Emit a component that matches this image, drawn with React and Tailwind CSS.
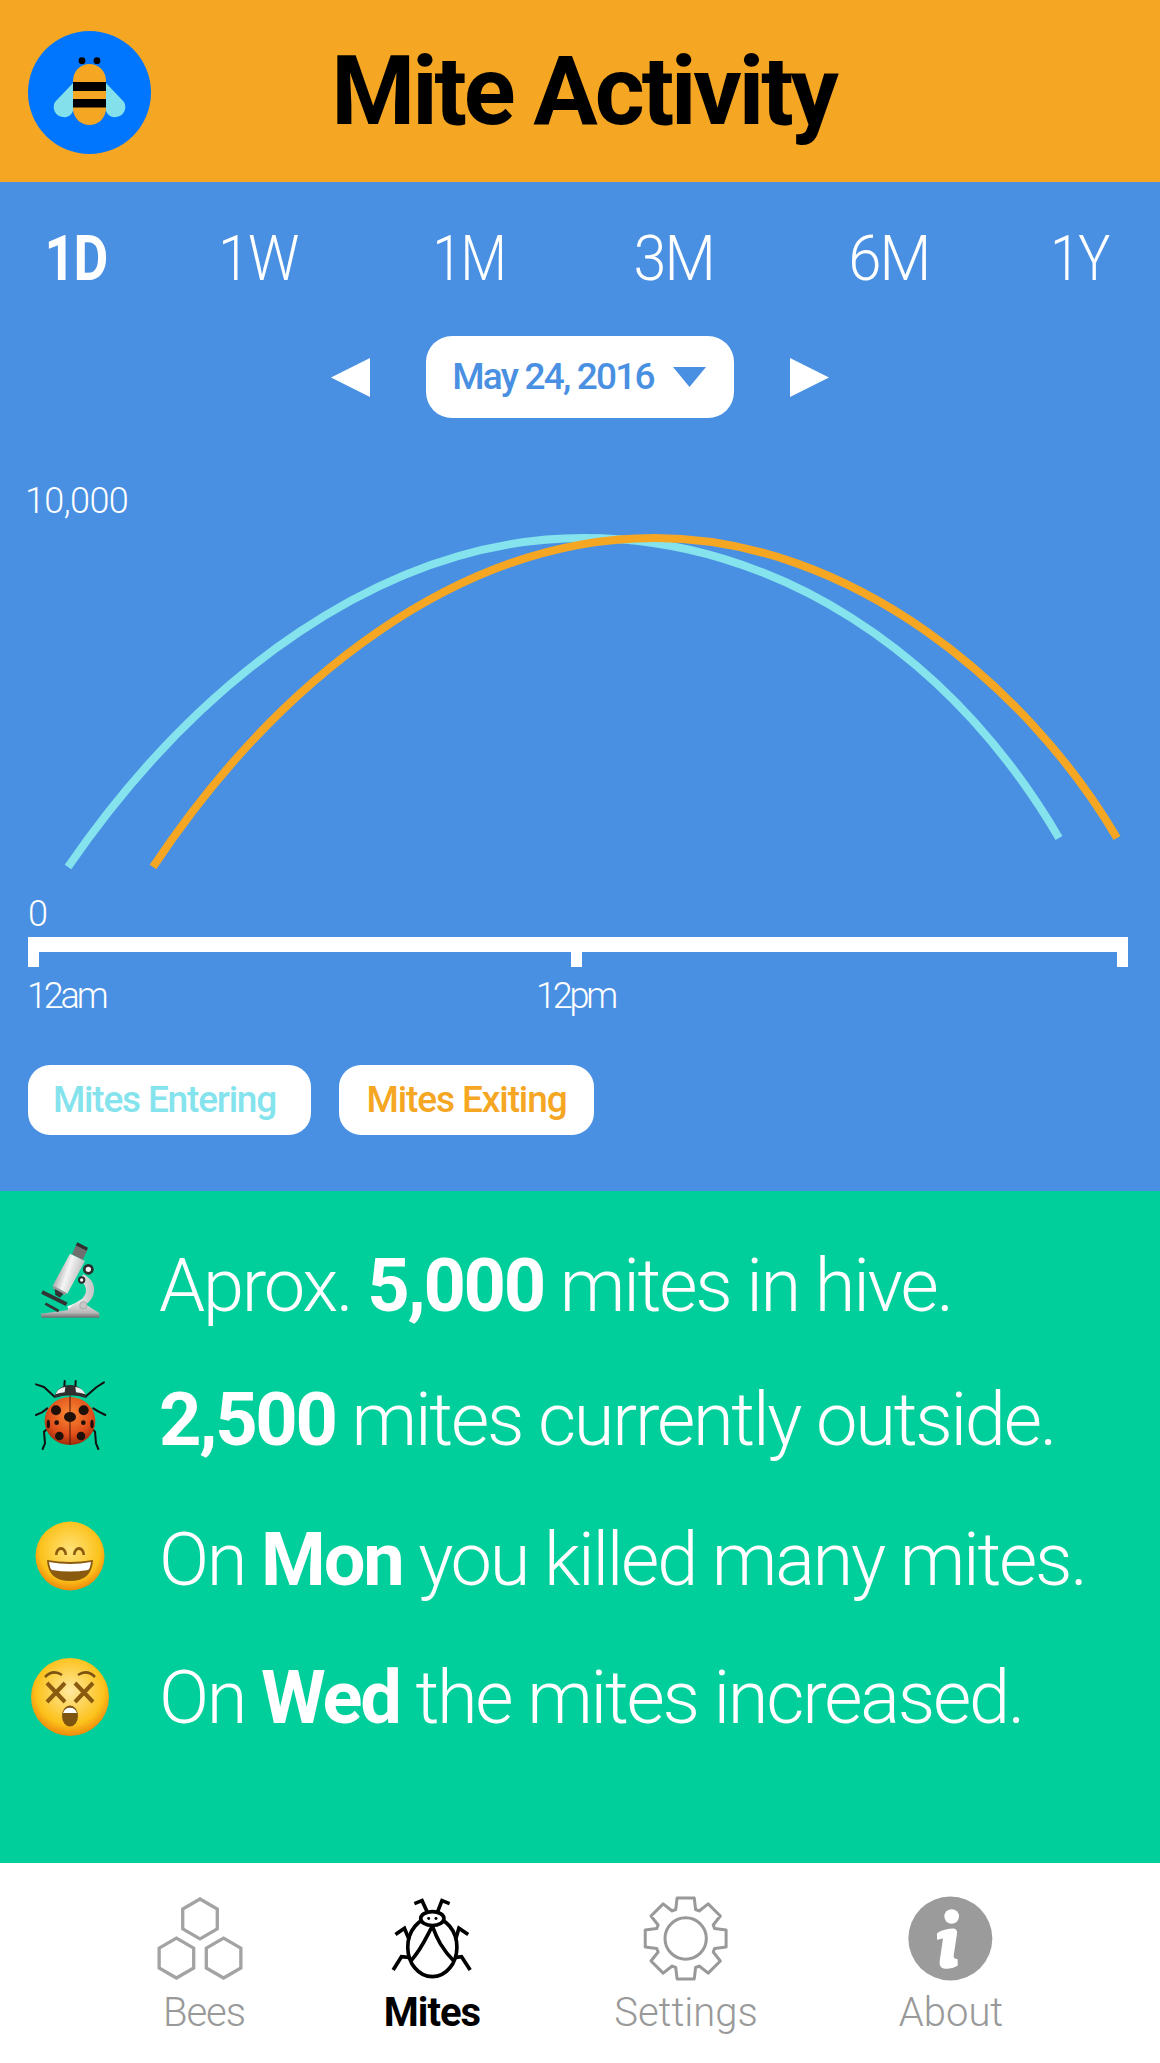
import React from "react";

const gearPath = (() => {
  const cx = 319, cy = 208, n = 8, ro = 124, ri = 92;
  const pts = [];
  for (let i = 0; i < n; i++) {
    const a = (i * 2 * Math.PI) / n - Math.PI / 2;
    const d = 0.21, e = 0.33;
    pts.push([a - e, ri], [a - d, ro], [a + d, ro], [a + e, ri]);
  }
  return pts.map(([a, r], i) => `${i ? "L" : "M"}${(cx + r * Math.cos(a)).toFixed(1)} ${(cy + r * Math.sin(a)).toFixed(1)}`).join(" ") + "Z";
})();

const hex = (cx, cy, r) => {
  const p = [];
  for (let i = 0; i < 6; i++) {
    const a = (i * Math.PI) / 3 - Math.PI / 2;
    p.push(`${(cx + r * Math.cos(a)).toFixed(1)},${(cy + r * Math.sin(a)).toFixed(1)}`);
  }
  return p.join(" ");
};

const F = "[font-family:'Roboto','Liberation_Sans',sans-serif]";

function Bee() {
  return (
    <svg viewBox="0 0 123 123" className="w-[123px] h-[123px]">
      <circle cx="61.5" cy="61.5" r="61.5" fill="#0076ff" />
      <path d="M45 52 L27 71 a10 10 0 0 0 8 15 q7 1 10 -6 Z" fill="#84e0ea" />
      <path d="M78 52 L96 71 a10 10 0 0 1 -8 15 q-7 1 -10 -6 Z" fill="#84e0ea" />
      <rect x="45" y="33" width="33" height="61" rx="16.5" fill="#f5a623" />
      <rect x="45" y="51" width="33" height="9" fill="#000" />
      <rect x="45" y="68" width="33" height="8.5" fill="#000" />
      <circle cx="54" cy="29.7" r="3.4" fill="#000" />
      <circle cx="69" cy="29.7" r="3.4" fill="#000" />
    </svg>
  );
}

function Microscope() {
  return (
    <svg viewBox="0 0 240 270" className="w-[80px] h-[90px] -translate-y-[6px]">
      <defs>
        <linearGradient id="tube" x1="0" y1="0.3" x2="1" y2="0.7">
          <stop offset="0" stopColor="#7f7f7f" /><stop offset="0.45" stopColor="#f5f5f5" /><stop offset="1" stopColor="#a8a8a8" />
        </linearGradient>
        <linearGradient id="base" x1="0" y1="0" x2="0" y2="1">
          <stop offset="0" stopColor="#ececec" /><stop offset="0.7" stopColor="#b9b9b9" /><stop offset="1" stopColor="#6f6f6f" />
        </linearGradient>
        <linearGradient id="arm" x1="0" y1="0" x2="1" y2="0">
          <stop offset="0" stopColor="#ffffff" /><stop offset="1" stopColor="#c4c4c4" />
        </linearGradient>
      </defs>
      <path d="M160 118 Q196 136 192 172 Q186 212 118 230 L112 214 Q166 196 168 168 Q168 146 146 134 Z" fill="url(#arm)" />
      <path d="M32 236 L110 226 L150 196 L176 214 L208 234 L208 248 L35 248 Z" fill="url(#base)" />
      <circle cx="160" cy="211" r="11" fill="#c8c8c8" stroke="#9a9a9a" strokeWidth="2" />
      <polygon points="138,30 172,45 158,76 126,58" fill="#6f6f6f" />
      <polygon points="142,22 174,38 170,47 137,31" fill="#2f2f2f" />
      <polygon points="120,56 165,78 112,176 68,152" fill="url(#tube)" />
      <polygon points="70,152 110,174 104,181 68,160" fill="#9a9a9a" />
      <polygon points="74,162 100,176 90,188 76,180" fill="#333" />
      <path d="M36 171 L110 208" stroke="#333" strokeWidth="12" />
      <path d="M46 206 L86 228" stroke="#333" strokeWidth="8" />
      <circle cx="175" cy="103" r="12" fill="#f5f5f5" stroke="#2b2b2b" strokeWidth="8" />
      <circle cx="155" cy="135" r="8" fill="#f5f5f5" stroke="#2b2b2b" strokeWidth="6" />
    </svg>
  );
}

function Ladybug() {
  return (
    <svg viewBox="0 0 240 255" className="w-[80px] h-[85px] -translate-y-[3px]">
      <defs>
        <radialGradient id="shell" cx="0.5" cy="0.35" r="0.72">
          <stop offset="0" stopColor="#f98a34" /><stop offset="0.6" stopColor="#e0501a" /><stop offset="1" stopColor="#8e1e08" />
        </radialGradient>
      </defs>
      <g stroke="#111" strokeWidth="6" fill="none" strokeLinecap="round" strokeLinejoin="round">
        <path d="M72 64 L42 36 L18 28" />
        <path d="M168 64 L200 36 L222 22" />
        <path d="M52 100 L36 112 L18 120" />
        <path d="M190 100 L206 110 L226 120" />
        <path d="M55 160 L42 170 L45 205 L38 222" />
        <path d="M185 160 L195 170 L198 205 L205 222" />
        <path d="M103 36 L104 18" />
        <path d="M136 36 L137 18" />
      </g>
      <ellipse cx="120" cy="138" rx="76" ry="72" fill="url(#shell)" />
      <path d="M72 70 Q80 32 120 30 Q160 32 170 70 Q120 52 72 70Z" fill="#2f2f2f" />
      <path d="M76 58 Q84 38 106 36 L104 52 Q90 54 76 58Z" fill="#eee" />
      <path d="M166 58 Q158 38 136 36 L138 52 Q152 54 166 58Z" fill="#eee" />
      <line x1="120" y1="58" x2="120" y2="210" stroke="#4a1206" strokeWidth="3" />
      <g fill="#20100a">
        <ellipse cx="120" cy="126" rx="18" ry="15" />
        <circle cx="78" cy="106" r="15" />
        <circle cx="161" cy="106" r="15" />
        <circle cx="80" cy="143" r="7" />
        <circle cx="160" cy="143" r="7" />
        <circle cx="88" cy="183" r="13" />
        <circle cx="153" cy="183" r="13" />
        <ellipse cx="55" cy="147" rx="5" ry="13" />
        <ellipse cx="186" cy="147" rx="5" ry="13" />
      </g>
    </svg>
  );
}

function Grin() {
  return (
    <svg viewBox="-40 -40 80 80" className="w-[80px] h-[80px] -translate-y-[4px]">
      <defs>
        <radialGradient id="face1" cx="0.5" cy="0.42" r="0.58">
          <stop offset="0" stopColor="#ffe27a" /><stop offset="0.75" stopColor="#fcc21b" /><stop offset="1" stopColor="#ee8a0a" />
        </radialGradient>
      </defs>
      <circle r="34.5" fill="url(#face1)" />
      <path d="M-15 -1 a6 8 0 0 1 12 0 h-2.5 a3.5 5 0 0 0 -7 0Z" fill="#8a5a0e" />
      <path d="M3 -1 a6 8 0 0 1 12 0 h-2.5 a3.5 5 0 0 0 -7 0Z" fill="#8a5a0e" />
      <path d="M-23 4 Q0 8 23 4 Q22 25 0 25 Q-22 25 -23 4Z" fill="#8a5a0e" />
      <path d="M-21 6 Q0 10 21 6 Q20 13 18 14 Q0 17 -18 14 Q-20 13 -21 6Z" fill="#fff" />
    </svg>
  );
}

function Dizzy() {
  return (
    <svg viewBox="-40 -40 80 80" className="w-[80px] h-[80px] -translate-y-[1px]">
      <defs>
        <radialGradient id="face2" cx="0.5" cy="0.42" r="0.58">
          <stop offset="0" stopColor="#ffe9a0" /><stop offset="0.75" stopColor="#fcc21b" /><stop offset="1" stopColor="#ee8a0a" />
        </radialGradient>
      </defs>
      <circle r="39" fill="url(#face2)" />
      <path d="M-25 -20 Q-17 -28 -8 -22" stroke="#7a5212" strokeWidth="2.6" fill="none" />
      <path d="M25 -20 Q17 -28 8 -22" stroke="#7a5212" strokeWidth="2.6" fill="none" />
      <path d="M-23 -14 L-5 5 M-5 -14 L-23 5 M5 -14 L23 5 M23 -14 L5 5" stroke="#8a5a0e" strokeWidth="4" fill="none" />
      <ellipse cx="0" cy="19" rx="8" ry="10.5" fill="#7e5510" />
      <path d="M-7 16 a7.5 8 0 0 1 14 0 Z" fill="#fff" />
    </svg>
  );
}

function HexIcon() {
  return (
    <svg viewBox="100 75 285 265" className="w-[95px] h-[88px] -ml-[8px]">
      <g fill="none" stroke="#a3a3a3" strokeWidth="10">
        <polygon points={hex(241, 150, 60)} />
        <polygon points={hex(170, 268, 60)} />
        <polygon points={hex(312, 268, 60)} />
      </g>
    </svg>
  );
}

function MiteIcon() {
  return (
    <svg viewBox="800 75 270 265" className="w-[90px] h-[88px]">
      <g fill="none" stroke="#000" strokeWidth="11">
        <ellipse cx="936" cy="235" rx="74" ry="89" />
        <ellipse cx="936" cy="149" rx="35" ry="21" fill="#fff" />
        <path d="M936 172 C920 200 905 240 870 278 M936 172 C950 210 965 240 1002 278" />
        <path d="M920 128 L905 95 L882 104 M952 128 L965 95 L988 104" />
        <path d="M866 212 L852 178 L825 197 M1006 212 L1016 178 L1044 197" />
        <path d="M865 266 L843 264 L818 304 M1007 266 L1024 264 L1050 304" />
      </g>
      <circle cx="925" cy="149" r="4.5" fill="#000" />
      <circle cx="947" cy="149" r="4.5" fill="#000" />
    </svg>
  );
}

function GearIcon() {
  return (
    <svg viewBox="185 75 270 266" className="w-[90px] h-[89px]">
      <g fill="none" stroke="#999" strokeWidth="9" strokeLinejoin="round">
        <path d={gearPath} />
        <circle cx="319" cy="208" r="62" />
      </g>
    </svg>
  );
}

function InfoIcon() {
  return (
    <svg viewBox="985 75 270 266" className="w-[90px] h-[89px]">
      <circle cx="1118" cy="208" r="126" fill="#9b9b9b" />
      <circle cx="1122" cy="142" r="22" fill="#fff" />
      <path d="M1078 192 Q1100 178 1128 178 Q1140 180 1138 194 L1128 260 Q1127 270 1140 270 L1140 290 Q1120 302 1098 298 Q1084 294 1086 276 L1096 208 L1078 212 Z" fill="#fff" />
    </svg>
  );
}

function NavItem({ icon, label, active, w, track }) {
  return (
    <div className={`flex flex-col items-center shrink-0 ${w}`}>
      <div className="h-[90px] flex items-center justify-center">{icon}</div>
      <div className={`mt-[6px] text-[40px] leading-[48px] ${track} ${active ? "font-bold text-black" : "font-light text-[#999]"}`}>{label}</div>
    </div>
  );
}

function Stat({ icon, children, h }) {
  return (
    <div className={`flex items-center ${h}`}>
      <div className="w-[140px] pl-[30px] flex justify-start shrink-0">{icon}</div>
      <div className="pl-[19px] text-[74px] leading-none font-light text-white tracking-[-2.25px] whitespace-nowrap">{children}</div>
    </div>
  );
}

const tabs = [
  { t: "1D", w: "w-[95px]", c: "font-bold scale-x-[0.85]" },
  { t: "1W", w: "w-[270px]", c: "scale-x-[0.91]" },
  { t: "1M", w: "w-[152px]", c: "scale-x-[0.85]" },
  { t: "3M", w: "w-[257px]", c: "scale-x-[0.94]" },
  { t: "6M", w: "w-[173px]", c: "scale-x-[0.95]" },
  { t: "1Y", w: "w-[208px]", c: "scale-x-[0.85]" },
];

export default function App() {
  return (
    <div className={`w-[1160px] h-[2063px] flex flex-col overflow-hidden ${F}`}>
      <header className="h-[182px] shrink-0 bg-[#f5a623] relative flex items-center justify-center">
        <div className="absolute left-[28px] top-[31px]"><Bee /></div>
        <h1 className="text-[96px] leading-none font-bold text-black tracking-[-3.1px] pl-[7px]">Mite Activity</h1>
      </header>

      <section className="h-[1009px] shrink-0 bg-[#4a90e2] flex flex-col px-[28px]">
        <div className="flex items-center h-[90px] mt-[31px] text-[63px] leading-none font-light text-white tracking-[-2px]">
          {tabs.map(({ t, w, c }) => (
            <div key={t} className={`flex justify-center shrink-0 ${w}`}>
              <span className={`inline-block ${c}`}>{t}</span>
            </div>
          ))}
        </div>
        <div className="flex items-center justify-center gap-[56px] mt-[33px] h-[82px]">
          <svg viewBox="0 0 39 39" className="w-[39px] h-[39px]"><polygon points="0,19.5 39,0 39,39" fill="#fff" /></svg>
          <div className="w-[308px] h-[82px] bg-white rounded-[26px] flex items-center justify-center gap-[19px] pr-[2px]">
            <span className="text-[37px] font-medium text-[#4a90e2] tracking-[-1.8px] whitespace-nowrap">May 24, 2016</span>
            <svg viewBox="0 0 33 20" className="w-[33px] h-[20px]"><polygon points="0,0 33,0 16.5,20" fill="#4a90e2" /></svg>
          </div>
          <svg viewBox="0 0 39 39" className="w-[39px] h-[39px]"><polygon points="39,19.5 0,0 0,39" fill="#fff" /></svg>
        </div>

        <div className="relative h-[437px] mt-[82px]">
          <div className="absolute left-[-3px] top-[-17px] text-[36px] leading-none font-light text-white tracking-[-0.6px]">10,000</div>
          <div className="absolute left-0 bottom-[5px] text-[36px] leading-none font-light text-white">0</div>
          <svg viewBox="28 500 1104 437" className="absolute inset-0 w-[1104px] h-[437px] overflow-visible">
            <path d="M68 867 C 198 678, 384 538, 584 538 C 774 538, 949 651, 1059 838" fill="none" stroke="#84e3ec" strokeWidth="8" />
            <path d="M153 867 C 279 678, 460 538, 655 538 C 850 538, 1027 685, 1117 838" fill="none" stroke="#f5a623" strokeWidth="8" />
          </svg>
        </div>

        <div className="relative h-[15px] w-[1100px] bg-white">
          <div className="absolute left-0 top-full w-[11px] h-[15px] bg-white" />
          <div className="absolute left-[543px] top-full w-[11px] h-[15px] bg-white" />
          <div className="absolute right-0 top-full w-[11px] h-[15px] bg-white" />
        </div>
        <div className="relative h-[50px] mt-[26px] text-[36px] leading-none font-light text-white tracking-[-3.2px]">
          <span className="absolute left-[-1px] top-0">12am</span>
          <span className="absolute left-[508px] top-0">12pm</span>
        </div>
        <div className="flex gap-[28px] mt-[37px]">
          <div className="w-[283px] h-[70px] bg-white rounded-[22px] flex items-center justify-center pr-[10px] text-[37px] font-medium text-[#84e3ec] tracking-[-1.2px] whitespace-nowrap">Mites Entering</div>
          <div className="w-[255px] h-[70px] bg-white rounded-[22px] flex items-center justify-center text-[37px] font-medium text-[#f5a623] tracking-[-1.1px] whitespace-nowrap">Mites Exiting</div>
        </div>
      </section>

      <section className="h-[672px] shrink-0 bg-[#00cf9c] pt-[30px]">
        <Stat icon={<Microscope />} h="h-[130px]">Aprox. <b className="font-bold">5,000</b> mites in hive.</Stat>
        <Stat icon={<Ladybug />} h="h-[138px]"><b className="font-bold">2,500</b> mites currently outside.</Stat>
        <Stat icon={<Grin />} h="h-[141px]">On <b className="font-bold">Mon</b> you killed many mites.</Stat>
        <Stat icon={<Dizzy />} h="h-[136px]">On <b className="font-bold">Wed</b> the mites increased.</Stat>
      </section>

      <nav className="flex-1 bg-white flex items-start pt-[30px] pl-[116px]">
        <NavItem icon={<HexIcon />} label="Bees" w="w-[176px]" track="tracking-[-1px]" />
        <NavItem icon={<MiteIcon />} label="Mites" active w="w-[280px]" track="tracking-[-1px]" />
        <NavItem icon={<GearIcon />} label="Settings" w="w-[228px]" track="tracking-[0px]" />
        <NavItem icon={<InfoIcon />} label="About" w="w-[302px]" track="tracking-[0px]" />
      </nav>
    </div>
  );
}
